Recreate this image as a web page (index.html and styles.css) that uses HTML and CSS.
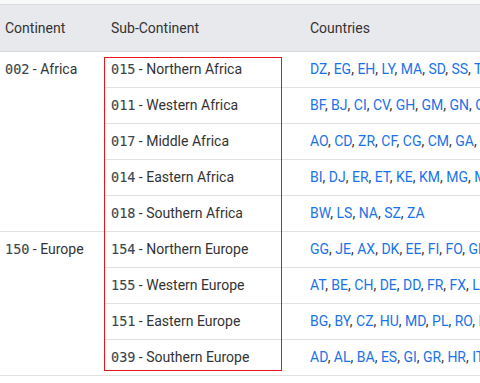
FILE: index.html
```html
<!DOCTYPE html>
<html>
<head>
<meta charset="utf-8">
<link rel="stylesheet" href="styles.css">
</head>
<body>
<div class="topstrip"></div>
<div class="wrap">
<table class="regions">
  <thead>
    <tr>
      <th class="c1">Continent</th>
      <th class="c2">Sub-Continent</th>
      <th class="c3">Countries</th>
    </tr>
  </thead>
  <tbody>
    <tr>
      <td class="c1" rowspan="5"><code>002</code> - Africa</td>
      <td class="c2"><code>015</code> - Northern Africa</td>
      <td class="c3"><a>DZ</a>, <a>EG</a>, <a>EH</a>, <a>LY</a>, <a>MA</a>, <a>SD</a>, <a>SS</a>, <a>TN</a></td>
    </tr>
    <tr>
      <td class="c2"><code>011</code> - Western Africa</td>
      <td class="c3"><a>BF</a>, <a>BJ</a>, <a>CI</a>, <a>CV</a>, <a>GH</a>, <a>GM</a>, <a>GN</a>, <a>GW</a>, <a>LR</a>, <a>ML</a>, <a>MR</a>, <a>NE</a>, <a>NG</a></td>
    </tr>
    <tr>
      <td class="c2"><code>017</code> - Middle Africa</td>
      <td class="c3"><a>AO</a>, <a>CD</a>, <a>ZR</a>, <a>CF</a>, <a>CG</a>, <a>CM</a>, <a>GA</a>, <a>GQ</a>, <a>ST</a>, <a>TD</a></td>
    </tr>
    <tr>
      <td class="c2"><code>014</code> - Eastern Africa</td>
      <td class="c3"><a>BI</a>, <a>DJ</a>, <a>ER</a>, <a>ET</a>, <a>KE</a>, <a>KM</a>, <a>MG</a>, <a>MU</a>, <a>MW</a>, <a>MZ</a>, <a>RE</a>, <a>RW</a></td>
    </tr>
    <tr>
      <td class="c2"><code>018</code> - Southern Africa</td>
      <td class="c3"><a>BW</a>, <a>LS</a>, <a>NA</a>, <a>SZ</a>, <a>ZA</a></td>
    </tr>
    <tr>
      <td class="c1" rowspan="4"><code>150</code> - Europe</td>
      <td class="c2"><code>154</code> - Northern Europe</td>
      <td class="c3"><a>GG</a>, <a>JE</a>, <a>AX</a>, <a>DK</a>, <a>EE</a>, <a>FI</a>, <a>FO</a>, <a>GB</a>, <a>IE</a>, <a>IM</a>, <a>IS</a>, <a>LT</a></td>
    </tr>
    <tr>
      <td class="c2"><code>155</code> - Western Europe</td>
      <td class="c3"><a>AT</a>, <a>BE</a>, <a>CH</a>, <a>DE</a>, <a>DD</a>, <a>FR</a>, <a>FX</a>, <a>LI</a>, <a>LU</a>, <a>MC</a>, <a>NL</a></td>
    </tr>
    <tr>
      <td class="c2"><code>151</code> - Eastern Europe</td>
      <td class="c3"><a>BG</a>, <a>BY</a>, <a>CZ</a>, <a>HU</a>, <a>MD</a>, <a>PL</a>, <a>RO</a>, <a>RU</a>, <a>SU</a>, <a>SK</a>, <a>UA</a></td>
    </tr>
    <tr>
      <td class="c2"><code>039</code> - Southern Europe</td>
      <td class="c3"><a>AD</a>, <a>AL</a>, <a>BA</a>, <a>ES</a>, <a>GI</a>, <a>GR</a>, <a>HR</a>, <a>IT</a>, <a>ME</a>, <a>MK</a>, <a>MT</a>, <a>PT</a></td>
    </tr>
  </tbody>
</table>
<div class="highlight"></div>
</div>
</body>
</html>
```
FILE: styles.css
```css
html, body {
  margin: 0;
  padding: 0;
  background: #ffffff;
  overflow: hidden;
}
body {
  font-family: Roboto, "Liberation Sans", sans-serif;
  font-size: 14px;
  color: #333333;
  width: 480px;
  height: 383px;
}
.topstrip {
  height: 4px;
  background: #f8f8f8;
}
.wrap {
  position: relative;
}
.regions {
  border-collapse: collapse;
  table-layout: fixed;
  width: 900px;
}
.regions th {
  background: #e8e9ec;
  border-top: 1px solid #dcdde0;
  border-bottom: 1px solid #d6d7da;
  height: 47px;
  padding: 0 7px;
  box-sizing: border-box;
  text-align: left;
  font-weight: 400;
  color: #333333;
  vertical-align: middle;
  line-height: 20px;
}
.regions td {
  padding: 7px 7px 8px;
  line-height: 20px;
  vertical-align: top;
  border-bottom: 1px solid #e1e1e1;
  white-space: nowrap;
  overflow: hidden;
}
.regions .c1 {
  width: 104px;
  box-sizing: border-box;
  padding-left: 5px;
}
.regions .c2 {
  width: 199px;
  box-sizing: border-box;
}
.regions .c3 {
  width: 597px;
}
code {
  font-family: "DejaVu Sans Mono", "Liberation Mono", monospace;
  font-size: 13.5px;
  color: #3a4650;
  -webkit-text-stroke: 0.12px #3a4650;
}
a {
  color: #1a73e8;
}
.highlight {
  position: absolute;
  left: 104px;
  top: 53px;
  width: 176px;
  height: 312px;
  border: 1px solid #e8141a;
  pointer-events: none;
}
```
